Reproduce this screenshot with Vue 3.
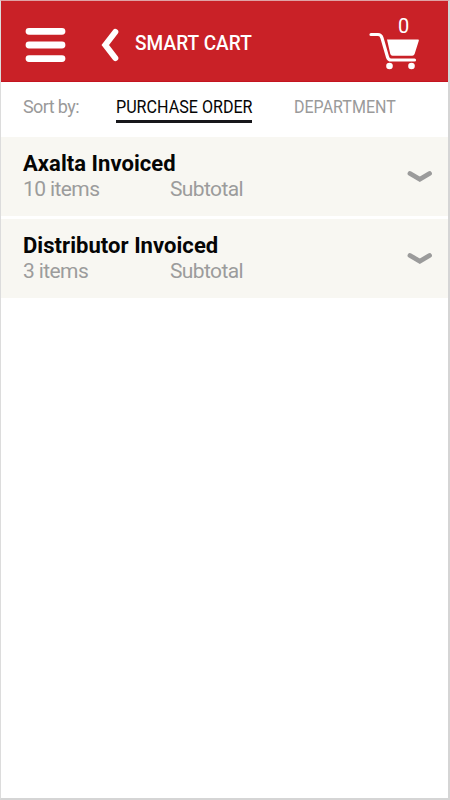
<template>
  <div class="screen">
    <header class="topbar">
      <svg class="menu" width="42" height="36" viewBox="0 0 42 36">
        <path d="M4 4.3H37M4 18H37M4 31.6H37" />
      </svg>
      <svg class="back" width="20" height="34" viewBox="0 0 20 34">
        <path d="M15.3 4L5.3 17L15.3 30" />
      </svg>
      <h1 class="heading">SMART CART</h1>
      <div class="cart">
        <span class="count">{{ cartCount }}</span>
        <svg width="52" height="38" viewBox="0 0 52 38">
          <path class="handle" d="M2 2.5H9Q12 2.5 13 6L18.5 25Q19.3 28 22 28H45.5" />
          <path class="basket" d="M18 7.5H49Q50.2 7.5 49.8 8.7L45.6 22Q45 23.7 43.3 23.7H23.5Q21.8 23.7 21.3 22Z" />
          <circle cx="20.5" cy="34" r="3.3" />
          <circle cx="42.5" cy="34" r="3.3" />
        </svg>
      </div>
    </header>

    <nav class="sort">
      <span class="label">Sort by:</span>
      <button
        v-for="tab in tabs"
        :key="tab.id"
        :class="['tab', tab.id, { active: tab.id === sortBy }]"
        @click="sortBy = tab.id"
      ><span class="caps">{{ tab.name }}</span></button>
    </nav>

    <section class="list">
      <div v-for="group in groups" :key="group.id" class="group">
        <div class="info">
          <div class="name">{{ group.name }}</div>
          <div class="detail">
            <span class="items">{{ group.items }} items</span>
            <span class="subtotal">Subtotal</span>
          </div>
        </div>
        <svg class="arrow" width="26" height="16" viewBox="0 0 26 16">
          <path d="M3 4.5L12.8 10.3L22.5 4.5" />
        </svg>
      </div>
    </section>
  </div>
</template>

<script setup>
import { ref } from 'vue'

const cartCount = ref(0)
const sortBy = ref('order')

const tabs = [
  { id: 'order', name: 'PURCHASE ORDER' },
  { id: 'department', name: 'DEPARTMENT' }
]

const groups = ref([
  { id: 'axalta', name: 'Axalta Invoiced', items: 10 },
  { id: 'distributor', name: 'Distributor Invoiced', items: 3 }
])
</script>

<style>
body {
  margin: 0;
  background: #fff;
}
</style>

<style scoped>
.screen {
  box-sizing: border-box;
  width: 450px;
  height: 800px;
  border: 1px solid #dcdcdc;
  border-right: 2px solid #d5d5d5;
  border-bottom: 2px solid #d5d5d5;
  border-top-color: #dfa3a5;
  background: #fff;
  font-family: Roboto, "Liberation Sans", sans-serif;
  overflow: hidden;
}

.topbar {
  display: flex;
  box-sizing: border-box;
  height: 81px;
  background: #c92127;
  border-bottom: 1px solid #c41420;
  color: #fff;
}

.menu {
  margin: 26px 0 0 24px;
}

.menu path,
.back path {
  fill: none;
  stroke: #fff;
  stroke-width: 6.8;
  stroke-linecap: round;
}

.back {
  margin: 27px 0 0 33px;
}

.back path {
  stroke-width: 6;
  stroke-linejoin: miter;
}

.heading {
  margin: 30px 0 0 15px;
  font-size: 21px;
  line-height: 25px;
  font-weight: 500;
  letter-spacing: 0.1px;
  white-space: nowrap;
  transform: scaleX(0.905);
  transform-origin: left;
}

.cart {
  display: flex;
  flex-direction: column;
  width: 52px;
  margin: 13px 27px 0 auto;
}

.count {
  padding-left: 29px;
  font-size: 20px;
  line-height: 24px;
  height: 18px;
}

.cart svg {
  fill: #fff;
}

.cart .handle {
  fill: none;
  stroke: #fff;
  stroke-width: 3.2;
  stroke-linecap: round;
}

.sort {
  display: flex;
  box-sizing: border-box;
  height: 55px;
  padding: 14px 0 0 22px;
  font-size: 18px;
  line-height: 21px;
  color: #9a9a9a;
}

.label {
  width: 93px;
  letter-spacing: -0.6px;
}

.tab {
  display: flex;
  align-items: flex-start;
  box-sizing: border-box;
  height: 27px;
  margin: 0;
  padding: 0;
  border: 0;
  background: none;
  font: inherit;
  color: inherit;
  white-space: nowrap;
}

.caps {
  transform: scaleX(0.895);
  transform-origin: left;
}

.order {
  width: 136px;
  margin-right: 42px;
}

.department {
  width: 102px;
}

.department .caps {
  transform: scaleX(0.89);
}

.tab.active {
  color: #050505;
  border-bottom: 3px solid #17171b;
}

.list {
  display: flex;
  flex-direction: column;
  gap: 3px;
}

.group {
  display: flex;
  box-sizing: border-box;
  height: 79px;
  padding: 14px 15px 0 22px;
  background: #f8f7f2;
}

.info {
  flex: 1;
}

.name {
  font-size: 22px;
  line-height: 25px;
  font-weight: 700;
  color: #050505;
  letter-spacing: 0.05px;
}

.detail {
  display: flex;
  font-size: 21px;
  line-height: 26px;
  letter-spacing: -0.6px;
  color: #9c9c9c;
}

.items {
  width: 147px;
}

.arrow {
  margin-top: 18px;
}

.arrow path {
  fill: none;
  stroke: #9b9b9b;
  stroke-width: 4.8;
  stroke-linecap: round;
}
</style>
